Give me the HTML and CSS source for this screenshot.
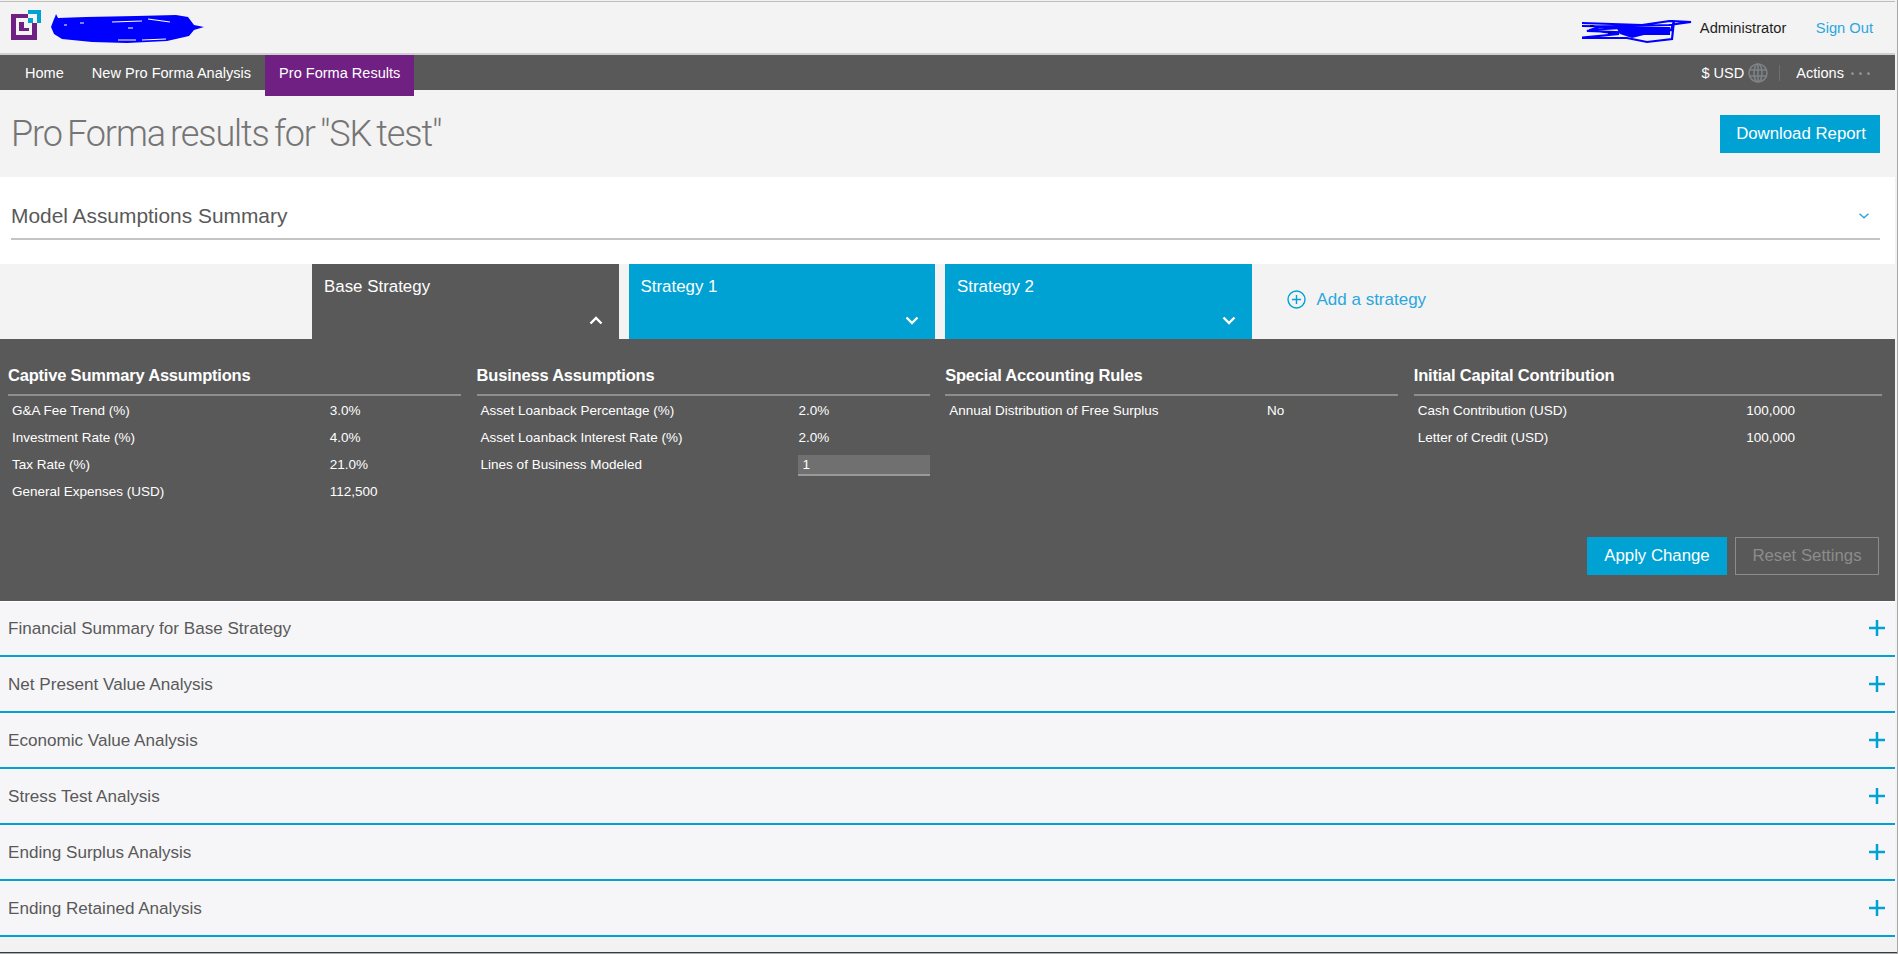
FILE: index.html
```html
<!DOCTYPE html>
<html lang="en">
<head>
<meta charset="utf-8">
<title>Pro Forma results</title>
<link rel="stylesheet" href="styles.css">
</head>
<body>
<div class="page">
  <header class="topbar">
    <div class="brand">
      <svg class="logo" width="30" height="30" viewBox="0 0 30 30">
        <path fill="#702082" d="M0 4h17v4H5v17h16V13h5v17H0z"/>
        <path fill="#702082" d="M8 12h5v6h5v3H8z"/>
        <path fill="#00a2d4" d="M17 0h13v13h-4V4h-9z"/>
        <path fill="#00a2d4" d="M17 8h5v5h-5z"/>
      </svg>
      <svg class="scribble-a" width="154" height="30" viewBox="0 0 154 30">
        <path fill="#0000ff" d="M6 0l2 4 28-1 50-1 40-1 12 2 6 8 10 2-10 3-5 6-22 5-40 2-35-1-30-3-8-5-3-7 3-8 1-2z"/>
        <path fill="none" stroke="#ffffff" stroke-width="1.200" d="M62 8l30-1M98 5l22 3M68 26l18 0M92 26l24-1M30 9l4 0M78 14l5 0M14 11l3 0"/>
      </svg>
    </div>
    <div class="userbox">
      <svg class="scribble-b" width="110" height="24" viewBox="0 0 110 24">
        <path fill="none" stroke="#0000ff" stroke-width="2.200" d="M0 3l30 1 30 1 28-4 21 1-22 3-70 2-12 4 58 2 26-3 3-9-2 18-25 3-20-4-48 0 40-4-30-4 48-3-55-1"/>
        <path fill="#0000ff" d="M34 7h54v8H62l-12 3-12-4z"/>
        <path fill="#000080" d="M8 5h4v2H8zM26 12h3v2h-3z"/>
      </svg>
      <span class="role">Administrator</span>
      <a class="signout">Sign Out</a>
    </div>
  </header>

  <nav class="mainnav">
    <ul class="tabs">
      <li class="tab">Home</li>
      <li class="tab">New Pro Forma Analysis</li>
      <li class="tab tab-active">Pro Forma Results</li>
    </ul>
    <div class="navtools">
      <span class="currency">$ USD</span>
      <svg class="globe" width="20" height="20" viewBox="0 0 20 20" fill="none" stroke="#7d8287" stroke-width="1.600">
        <circle cx="10" cy="10" r="9"/>
        <ellipse cx="10" cy="10" rx="4" ry="9"/>
        <path d="M10 1v18M1.500 7h17M1.500 13h17"/>
      </svg>
      <span class="navdivider"></span>
      <span class="actions">Actions</span>
      <span class="dots"><i></i><i></i><i></i></span>
    </div>
  </nav>

  <section class="titlebar">
    <h1 class="pagetitle">Pro Forma results for "SK test"</h1>
    <button class="btn btn-primary btn-download">Download Report</button>
  </section>

  <section class="summary">
    <div class="summaryhead">
      <h2 class="summarytitle">Model Assumptions Summary</h2>
      <svg class="summarychev" width="10" height="6" viewBox="0 0 10 6" fill="none" stroke="#2aa7df" stroke-width="1.500"><path d="M.5 .8L5 4.800 9.500 .8"/></svg>
    </div>
  </section>

  <section class="strategies">
    <div class="stratcard stratcard-active">
      <span>Base Strategy</span>
      <svg class="stratchev" width="14" height="9" viewBox="0 0 14 9" fill="none" stroke="#fff" stroke-width="2.400"><path d="M1.500 7.500L7 2l5.500 5.500"/></svg>
    </div>
    <div class="stratcard">
      <span>Strategy 1</span>
      <svg class="stratchev" width="14" height="9" viewBox="0 0 14 9" fill="none" stroke="#fff" stroke-width="2.400"><path d="M1.500 1.500L7 7l5.500-5.500"/></svg>
    </div>
    <div class="stratcard">
      <span>Strategy 2</span>
      <svg class="stratchev" width="14" height="9" viewBox="0 0 14 9" fill="none" stroke="#fff" stroke-width="2.400"><path d="M1.500 1.500L7 7l5.500-5.500"/></svg>
    </div>
    <a class="addstrat">
      <svg width="19" height="19" viewBox="0 0 19 19" fill="none" stroke="#00a2d4" stroke-width="1.400"><circle cx="9.500" cy="9.500" r="8.500"/><path d="M9.500 5v9M5 9.500h9"/></svg>
      <span>Add a strategy</span>
    </a>
  </section>

  <section class="panel">
    <div class="panelcols">
      <div class="pcol">
        <h3 class="pcolhead">Captive Summary Assumptions</h3>
        <div class="prow"><span>G&amp;A Fee Trend (%)</span><span>3.0%</span></div>
        <div class="prow"><span>Investment Rate (%)</span><span>4.0%</span></div>
        <div class="prow"><span>Tax Rate (%)</span><span>21.0%</span></div>
        <div class="prow"><span>General Expenses (USD)</span><span>112,500</span></div>
      </div>
      <div class="pcol">
        <h3 class="pcolhead">Business Assumptions</h3>
        <div class="prow"><span>Asset Loanback Percentage (%)</span><span>2.0%</span></div>
        <div class="prow"><span>Asset Loanback Interest Rate (%)</span><span>2.0%</span></div>
        <div class="prow"><span>Lines of Business Modeled</span><span class="pinput">1</span></div>
      </div>
      <div class="pcol">
        <h3 class="pcolhead">Special Accounting Rules</h3>
        <div class="prow"><span>Annual Distribution of Free Surplus</span><span>No</span></div>
      </div>
      <div class="pcol">
        <h3 class="pcolhead">Initial Capital Contribution</h3>
        <div class="prow"><span>Cash Contribution (USD)</span><span>100,000</span></div>
        <div class="prow"><span>Letter of Credit (USD)</span><span>100,000</span></div>
      </div>
    </div>
    <div class="panelactions">
      <button class="btn btn-primary btn-apply">Apply Change</button>
      <button class="btn btn-ghost">Reset Settings</button>
    </div>
  </section>

  <section class="accordion">
    <div class="accrow"><span>Financial Summary for Base Strategy</span><svg class="plus" width="16" height="16" viewBox="0 0 16 16"><path fill="none" stroke="#00a2d4" stroke-width="2.500" d="M8 0v16M0 8h16"/></svg></div>
    <div class="accrow"><span>Net Present Value Analysis</span><svg class="plus" width="16" height="16" viewBox="0 0 16 16"><path fill="none" stroke="#00a2d4" stroke-width="2.500" d="M8 0v16M0 8h16"/></svg></div>
    <div class="accrow"><span>Economic Value Analysis</span><svg class="plus" width="16" height="16" viewBox="0 0 16 16"><path fill="none" stroke="#00a2d4" stroke-width="2.500" d="M8 0v16M0 8h16"/></svg></div>
    <div class="accrow"><span>Stress Test Analysis</span><svg class="plus" width="16" height="16" viewBox="0 0 16 16"><path fill="none" stroke="#00a2d4" stroke-width="2.500" d="M8 0v16M0 8h16"/></svg></div>
    <div class="accrow"><span>Ending Surplus Analysis</span><svg class="plus" width="16" height="16" viewBox="0 0 16 16"><path fill="none" stroke="#00a2d4" stroke-width="2.500" d="M8 0v16M0 8h16"/></svg></div>
    <div class="accrow"><span>Ending Retained Analysis</span><svg class="plus" width="16" height="16" viewBox="0 0 16 16"><path fill="none" stroke="#00a2d4" stroke-width="2.500" d="M8 0v16M0 8h16"/></svg></div>
  </section>
  <div class="bottomedge"></div>
</div>
</body>
</html>
```
FILE: styles.css
```css
* { box-sizing: border-box; }
html, body { margin: 0; padding: 0; height: 100%; overflow: hidden; background: #f2f2f2; }
body {
  font-family: "Liberation Sans", Arial, sans-serif;
  color: #595959;
  border-right: 1px solid #a8a8a8;
}
h1, h2, h3, ul { margin: 0; padding: 0; font-weight: normal; }
ul { list-style: none; }
button { font-family: inherit; border: 0; cursor: pointer; }

.page { width: 1895px; padding-top: 1px; }

.topbar {
  height: 54px;
  border-top: 1px solid #bdbdbd;
  border-bottom: 2px solid #cfcfcf;
  background: #f3f3f3;
  display: flex;
  justify-content: space-between;
  align-items: flex-start;
  padding: 8px 22px 0 11px;
}
.brand { display: flex; align-items: flex-start; gap: 9px; }
.scribble-a { margin-top: 4px; }
.userbox { display: flex; align-items: flex-start; font-size: 14.700px; }
.scribble-b { margin-top: 10px; margin-right: 8px; }
.role { color: #1f1f1f; margin-top: 10px; width: 116px; }
.signout { color: #2aa7df; margin-top: 10px; }

.mainnav {
  height: 35px;
  background: #595959;
  color: #fff;
  display: flex;
  justify-content: space-between;
  padding-left: 11px;
  padding-right: 25px;
  font-size: 14.550px;
}
.tabs { display: flex; }
.tab { padding: 0 14px; line-height: 37px; height: 35px; }
.tab-active { background: #702082; height: 41px; position: relative; }
.navtools { display: flex; align-items: center; }
.globe { margin-left: 4px; }
.navdivider { width: 1px; height: 16px; background: #6f6f6f; margin: 0 16px 0 11px; }
.dots { display: flex; gap: 5px; margin-left: 7px; margin-top: 2px; }
.dots i { width: 3px; height: 3px; border-radius: 50%; background: #8e8e8e; display: block; }

.titlebar {
  height: 87px;
  display: flex;
  justify-content: space-between;
  align-items: center;
  padding: 0 15px 0 11px;
  background: #f3f3f3;
}
.pagetitle {
  font-family: Roboto, "Liberation Sans", sans-serif;
  font-weight: 300;
  font-size: 36px;
  color: #757575;
  letter-spacing: -1.100px;
  word-spacing: -2.500px;
  padding-top: 1px;
}
.btn { font-size: 16.800px; height: 38px; }
.btn-primary { background: #00a2d4; color: #fff; }
.btn-download { width: 160px; padding-left: 8px; }

.summary { height: 87px; background: #fff; padding: 0 15px 0 11px; }
.summaryhead {
  height: 63px;
  border-bottom: 2px solid #c4c4c4;
  display: flex;
  justify-content: space-between;
  align-items: center;
  padding-top: 16px;
  padding-right: 11px;
}
.summarytitle { font-size: 20.900px; color: #595959; }

.strategies {
  height: 75px;
  padding-left: 312px;
  display: flex;
  gap: 10px;
  background: #f3f3f3;
}
.stratcard {
  width: 306.500px;
  background: #00a2d4;
  color: #fff;
  font-size: 16.900px;
  padding: 13px 12px 0;
  display: flex;
  flex-direction: column;
  justify-content: space-between;
  align-items: flex-start;
}
.stratcard-active { background: #595959; }
.stratchev { align-self: flex-end; margin-bottom: 14px; margin-right: 4px; }
.addstrat {
  display: flex;
  align-items: center;
  gap: 11px;
  color: #2aa7df;
  font-size: 17px;
  padding-left: 25px;
  height: 71px;
}

.panel {
  height: 262px;
  background: #595959;
  color: #fff;
  padding: 26px 12px 26px 8px;
  display: flex;
  flex-direction: column;
  justify-content: space-between;
}
.panelcols { display: grid; grid-template-columns: 453px 453px 453px 468px; column-gap: 15.600px; }
.pcolhead {
  font-size: 16.500px;
  font-weight: bold;
  letter-spacing: -0.200px;
  height: 31px;
  border-bottom: 2px solid #8e8e8e;
  line-height: 20px;
}
.prow {
  display: grid;
  grid-template-columns: 71% 29%;
  font-size: 13.500px;
  height: 27px;
  line-height: 29px;
  padding-left: 4px;
}
.prow span:last-child { margin-left: -1px; }
.prow .pinput {
  background: #707070;
  border-bottom: 2px solid #9a9a9a;
  height: 21px;
  line-height: 19px;
  margin-top: 5px;
  padding-left: 4px;
  margin-left: -1px;
}
.panelactions { display: flex; justify-content: flex-end; gap: 8px; padding-right: 4px; }
.btn-apply { width: 140px; }
.btn-ghost {
  width: 144px;
  background: transparent;
  border: 1px solid #8c8c8c;
  color: #8c8c8c;
}

.accrow {
  height: 56px;
  background: #f6f6f8;
  border-bottom: 2px solid #00a2d4;
  display: flex;
  justify-content: space-between;
  align-items: center;
  padding: 0 10px 0 8px;
  font-size: 17.100px;
  color: #595959;
  box-shadow: inset 0 1px 0 #ffffff;
}
.accrow span { padding-top: 2px; }
.bottomedge {
  margin-top: 15px;
  height: 2px;
  border-top: 1px solid #3a3a3a;
  background: #a8b0b8;
  width: 1898px;
}
```
